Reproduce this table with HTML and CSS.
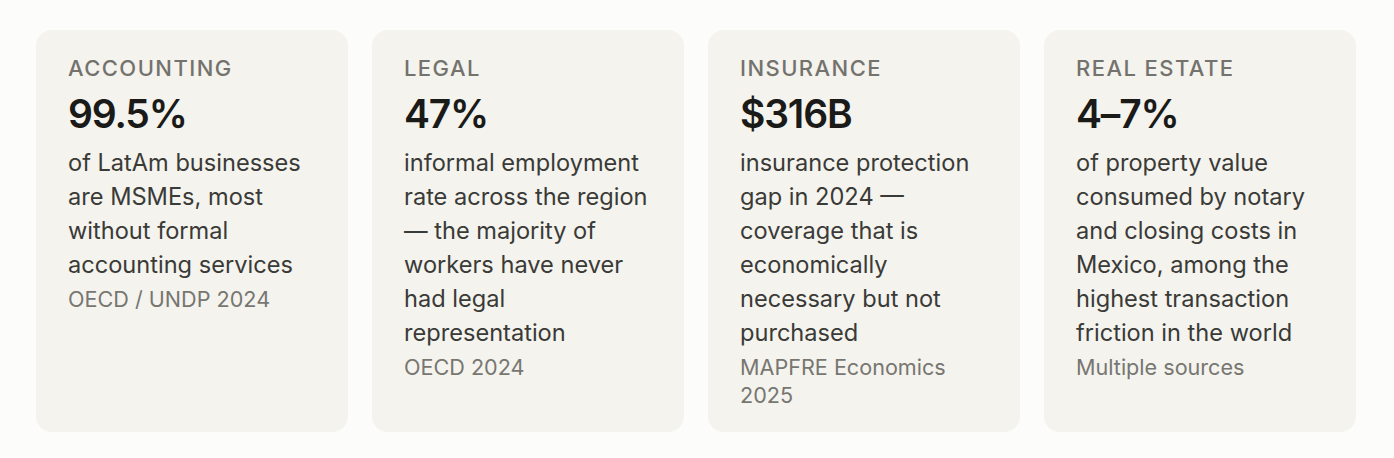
FILE: index.html
```html
<!DOCTYPE html>
<html lang="en">
<head>
<meta charset="utf-8">
<title>Stats</title>
<link rel="stylesheet" href="styles.css">
</head>
<body>
<section class="stats">
  <article class="card">
    <div class="label">Accounting</div>
    <div class="value">99.5%</div>
    <p class="desc">of LatAm businesses are MSMEs, most without formal accounting services</p>
    <div class="source">OECD / UNDP 2024</div>
  </article>
  <article class="card">
    <div class="label">Legal</div>
    <div class="value">47%</div>
    <p class="desc">informal employment rate across the region — the majority of workers have never had legal representation</p>
    <div class="source">OECD 2024</div>
  </article>
  <article class="card">
    <div class="label">Insurance</div>
    <div class="value">$316B</div>
    <p class="desc">insurance protection gap in 2024 — coverage that is economically necessary but not purchased</p>
    <div class="source">MAPFRE Economics 2025</div>
  </article>
  <article class="card">
    <div class="label">Real Estate</div>
    <div class="value">4–7%</div>
    <p class="desc">of property value consumed by notary and closing costs in Mexico, among the highest transaction friction in the world</p>
    <div class="source">Multiple sources</div>
  </article>
</section>
</body>
</html>
```
FILE: styles.css
```css
html, body {
  margin: 0;
  padding: 0;
  background: #fcfcfa;
}
body {
  font-family: Inter, "Noto Sans", sans-serif;
  padding: 30px 38px 26px 36px;
}
.stats {
  display: grid;
  grid-template-columns: repeat(4, 1fr);
  gap: 24px;
}
.card {
  background: #f4f3ee;
  border-radius: 16px;
  padding: 25px 32px 28px 32px;
  height: 402px;
  box-sizing: border-box;
  display: flex;
  flex-direction: column;
}
.label {
  font-size: 22px;
  line-height: 26px;
  font-weight: 500;
  letter-spacing: 0.065em;
  text-transform: uppercase;
  color: #73726d;
}
.value {
  font-size: 39px;
  line-height: 48px;
  font-weight: 600;
  color: #1a1a18;
  margin-top: 9px;
  letter-spacing: -0.03em;
}
.desc {
  margin: 8px 0 0;
  font-size: 23.6px;
  line-height: 34px;
  color: #3a3a37;
}
.source {
  margin-top: 3px;
  font-size: 21.6px;
  line-height: 28px;
  color: #777671;
}
```
